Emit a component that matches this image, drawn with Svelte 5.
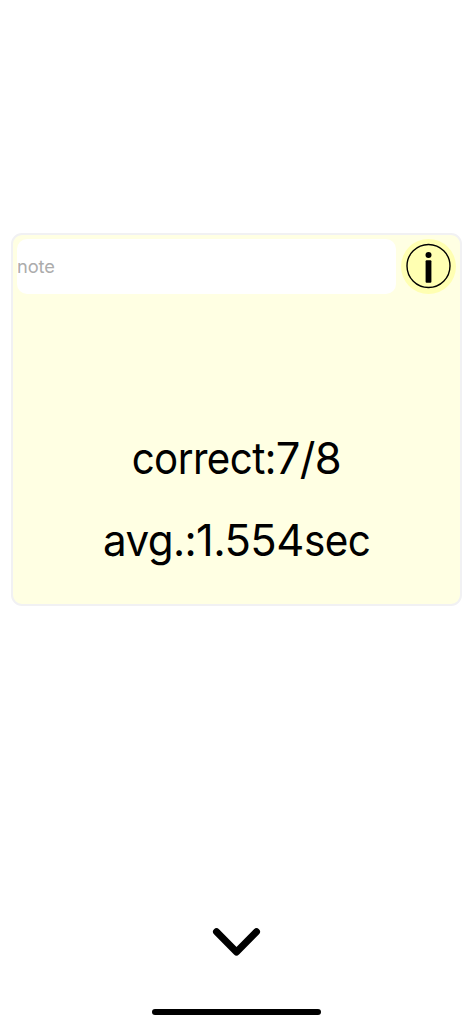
<script>
  let note = $state('');
  const correct = 7;
  const total = 8;
  const average = '1.554';
</script>

<main class="screen">
  <section class="card">
    <header class="top">
      <input class="note" placeholder="note" aria-label="note" bind:value={note} />
      <button class="info" aria-label="info">
        <svg width="55" height="55" viewBox="0 0 55 55">
          <circle cx="27.5" cy="27" r="21.5" fill="none" stroke="#000" stroke-width="1.4" />
          <circle cx="27.5" cy="16" r="3" />
          <rect x="24.6" y="21.3" width="5.8" height="22.5" rx="1" />
        </svg>
      </button>
    </header>
    <div class="results">
      <p><span class="label">correct:</span>{correct}/{total}</p>
      <p><span class="short">avg.:</span>{average}<span class="unit">sec</span></p>
    </div>
  </section>
  <footer class="bottom">
    <button class="down" aria-label="close">
      <svg width="50" height="32" viewBox="0 0 50 32">
        <path d="M4.5 5.7 24.5 26 44.5 5.7" fill="none" stroke="#000" stroke-width="7" stroke-linecap="round" stroke-linejoin="round" />
      </svg>
    </button>
    <div class="home"></div>
  </footer>
</main>

<style>
  :global(body) {
    background: #fff;
  }
  .screen {
    box-sizing: border-box;
    height: 1024px;
    padding: 233px 11px 9px;
    display: flex;
    flex-direction: column;
    overflow: hidden;
    font-family: Inter, "Liberation Sans", sans-serif;
    color: #000;
  }
  .card {
    box-sizing: border-box;
    height: 373px;
    border: 2px solid #f1f1f3;
    border-radius: 11px;
    background: #ffffe3;
    padding: 4px;
  }
  .top {
    display: flex;
    justify-content: space-between;
  }
  .note {
    box-sizing: border-box;
    width: 378.5px;
    height: 55px;
    padding: 0 0 2px;
    border: 0;
    border-radius: 10px;
    outline: 0;
    background: #fff;
    font: 18.3px Inter, "Liberation Sans", sans-serif;
    letter-spacing: -0.1px;
  }
  .note::placeholder {
    color: #acacac;
    opacity: 1;
  }
  button {
    padding: 0;
    border: 0;
    background: none;
    display: block;
  }
  .info {
    width: 55px;
    height: 55px;
    border-radius: 50%;
    background: #ffffb2;
  }
  svg {
    display: block;
  }
  .results {
    padding-top: 123px;
    text-align: center;
    font-size: 43.5px;
    line-height: 82px;
    letter-spacing: -0.6px;
  }
  p {
    margin: 0;
    white-space: nowrap;
  }
  span {
    display: inline-block;
  }
  .label {
    transform: scaleX(0.925);
    transform-origin: right;
    margin-left: -12px;
  }
  .short {
    transform: scaleX(0.97);
    transform-origin: right;
    margin-left: -3px;
  }
  .unit {
    transform: scaleX(0.93);
    transform-origin: left;
    margin-right: -5px;
  }
  .bottom {
    margin-top: auto;
    display: flex;
    flex-direction: column;
    align-items: center;
    gap: 51px;
  }
  .home {
    width: 169px;
    height: 6px;
    border-radius: 3px;
    background: #000;
  }
</style>
